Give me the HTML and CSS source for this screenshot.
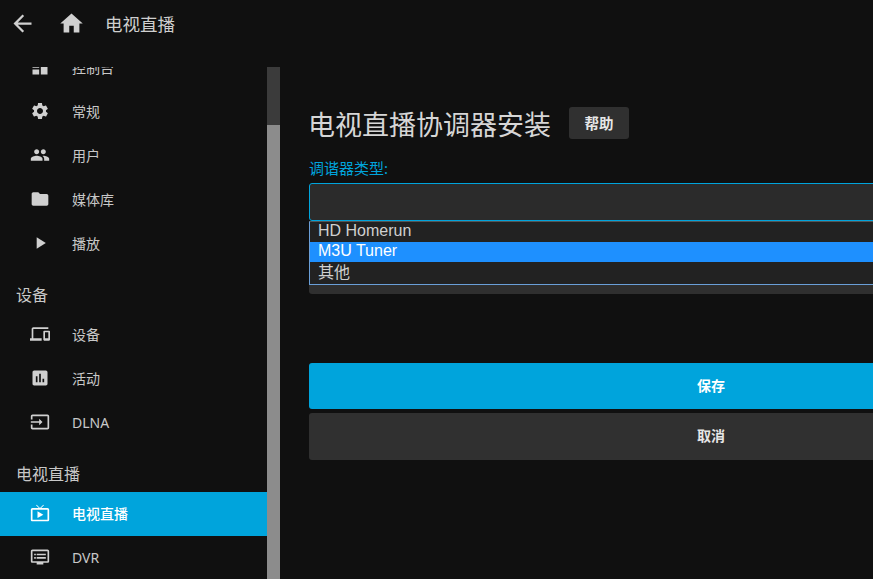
FILE: index.html
```html
<!DOCTYPE html>
<html lang="zh">
<head>
    <meta charset="UTF-8">
    <title>电视直播</title>
    <link rel="stylesheet" href="styles.css">
</head>
<body>
    <header class="topbar">
        <svg class="top-icon back" viewBox="0 0 24 24"><path d="M20 11H7.83l5.59-5.59L12 4l-8 8 8 8 1.41-1.41L7.83 13H20v-2z"/></svg>
        <svg class="top-icon home" viewBox="0 0 24 24"><path d="M10 20v-6h4v6h5v-8h3L12 3 2 12h3v8z"/></svg>
        <span class="top-title">电视直播</span>
    </header>
    <div class="layout">
        <nav class="sidebar">
            <div class="menu">
                <a class="item"><svg viewBox="0 0 24 24"><path d="M3 13h8V3H3v10zm0 8h8v-6H3v6zm10 0h8V11h-8v10zm0-18v6h8V3h-8z"/></svg><span>控制台</span></a>
                <a class="item"><svg viewBox="0 0 24 24"><path d="M19.14 12.94c.04-.3.06-.61.06-.94 0-.32-.02-.64-.07-.94l2.03-1.58c.18-.14.23-.41.12-.61l-1.92-3.32c-.12-.22-.37-.29-.59-.22l-2.39.96c-.5-.38-1.03-.7-1.62-.94l-.36-2.54c-.04-.24-.24-.41-.48-.41h-3.84c-.24 0-.43.17-.47.41l-.36 2.54c-.59.24-1.13.57-1.62.94l-2.39-.96c-.22-.08-.47 0-.59.22L2.74 8.87c-.12.21-.08.47.12.61l2.03 1.58c-.05.3-.09.63-.09.94s.02.64.07.94l-2.03 1.58c-.18.14-.23.41-.12.61l1.92 3.32c.12.22.37.29.59.22l2.39-.96c.5.38 1.03.7 1.62.94l.36 2.54c.05.24.24.41.48.41h3.84c.24 0 .44-.17.47-.41l.36-2.54c.59-.24 1.13-.56 1.62-.94l2.39.96c.22.08.47 0 .59-.22l1.92-3.32c.12-.22.07-.47-.12-.61l-2.01-1.58zM12 15.6c-1.98 0-3.6-1.62-3.6-3.6s1.62-3.6 3.6-3.6 3.6 1.62 3.6 3.6-1.62 3.6-3.6 3.6z"/></svg><span>常规</span></a>
                <a class="item"><svg viewBox="0 0 24 24"><path d="M16 11c1.66 0 2.99-1.34 2.99-3S17.66 5 16 5c-1.66 0-3 1.34-3 3s1.34 3 3 3zm-8 0c1.66 0 2.99-1.34 2.99-3S9.66 5 8 5C6.34 5 5 6.34 5 8s1.34 3 3 3zm0 2c-2.33 0-7 1.17-7 3.5V19h14v-2.5c0-2.33-4.67-3.5-7-3.5zm8 0c-.29 0-.62.02-.97.05 1.16.84 1.97 1.97 1.97 3.45V19h6v-2.5c0-2.33-4.67-3.5-7-3.5z"/></svg><span>用户</span></a>
                <a class="item"><svg viewBox="0 0 24 24"><path d="M10 4H4c-1.1 0-1.99.9-1.99 2L2 18c0 1.1.9 2 2 2h16c1.1 0 2-.9 2-2V8c0-1.1-.9-2-2-2h-8l-2-2z"/></svg><span>媒体库</span></a>
                <a class="item"><svg viewBox="0 0 24 24"><path d="M8 5v14l11-7z"/></svg><span>播放</span></a>

                <h3 class="section">设备</h3>
                <a class="item"><svg viewBox="0 0 24 24"><path d="M4 6h18V4H4c-1.1 0-2 .9-2 2v11H0v3h14v-3H4V6zm19 2h-6c-.55 0-1 .45-1 1v10c0 .55.45 1 1 1h6c.55 0 1-.45 1-1V9c0-.55-.45-1-1-1zm-1 9h-4v-7h4v7z"/></svg><span>设备</span></a>
                <a class="item"><svg viewBox="0 0 24 24"><path d="M19 3H5c-1.1 0-2 .9-2 2v14c0 1.1.9 2 2 2h14c1.1 0 2-.9 2-2V5c0-1.1-.9-2-2-2zM9 17H7v-7h2v7zm4 0h-2V7h2v10zm4 0h-2v-4h2v4z"/></svg><span>活动</span></a>
                <a class="item"><svg viewBox="0 0 24 24"><path d="M21 3.01H3c-1.1 0-2 .9-2 2V9h2V4.99h18v14.03H3V15H1v4.01c0 1.1.9 1.98 2 1.98h18c1.1 0 2-.88 2-1.98v-14c0-1.11-.9-2-2-2zM11 16l4-4-4-4v3H1v2h10v3z"/></svg><span>DLNA</span></a>

                <h3 class="section">电视直播</h3>
                <a class="item active"><svg viewBox="0 0 24 24"><path d="M21 6h-7.59l3.29-3.29L16 2l-4 4-4-4-.71.71L10.59 6H3c-1.1 0-2 .89-2 2v12c0 1.1.9 2 2 2h18c1.1 0 2-.9 2-2V8c0-1.11-.9-2-2-2zm0 14H3V8h18v12zM9 10v8l7-4z"/></svg><span>电视直播</span></a>
                <a class="item"><svg viewBox="0 0 24 24"><path d="M21 3H3c-1.1 0-2 .9-2 2v12c0 1.1.9 2 2 2h5v2h8v-2h5c1.1 0 1.99-.9 1.99-2L23 5c0-1.1-.9-2-2-2zm0 14H3V5h18v12zM19 8H8v2h11V8zm0 4H8v2h11v-2zM7 8H5v2h2V8zm0 4H5v2h2v-2z"/></svg><span>DVR</span></a>
            </div>
        </nav>
        <div class="scrollbar"><div class="scroll-thumb"></div></div>
        <main class="content">
            <div class="title-row">
                <h1>电视直播协调器安装</h1>
                <button class="help-btn">帮助</button>
            </div>
            <label class="field-label">调谐器类型:</label>
            <div class="select-wrap">
                <div class="select-box"></div>
                <div class="select-under"></div>
                <ul class="dropdown">
                    <li>HD Homerun</li>
                    <li class="selected">M3U Tuner</li>
                    <li>其他</li>
                </ul>
            </div>
            <button class="btn btn-save">保存</button>
            <button class="btn btn-cancel">取消</button>
        </main>
    </div>
</body>
</html>
```

FILE: styles.css
```css
html, body {
    height: 100%;
}

body {
    margin: 0;
    background-color: #101010;
    color: #d0d0d0;
    font-family: "Noto Sans", "Noto Sans CJK SC", sans-serif;
    overflow: hidden;
}

.topbar {
    height: 47px;
    display: flex;
    align-items: center;
    color: #cfcfcf;
}

.top-icon {
    width: 27px;
    height: 27px;
    fill: #d0d0d0;
    flex: none;
}

.back {
    margin-left: 9px;
}

.home {
    margin-left: 22px;
}

.top-title {
    margin-left: 20px;
    font-size: 17.5px;
}

.layout {
    display: flex;
    margin-top: 20px;
    height: 512px;
    overflow: hidden;
}

.sidebar {
    width: 267px;
    flex: none;
    overflow: hidden;
}

.menu {
    margin-top: -21px;
}

.item {
    display: flex;
    align-items: center;
    box-sizing: border-box;
    height: 44px;
    padding-left: 30px;
    padding-bottom: 2px;
    font-size: 14px;
    color: #c8c8c8;
}

.item svg {
    width: 20px;
    height: 20px;
    fill: #d0d0d0;
    margin-right: 22px;
    flex: none;
}

.item.active {
    background-color: #00a4dc;
    color: #fff;
    font-weight: 500;
}

.item.active svg {
    fill: #fff;
}

.section {
    margin: 0;
    padding: 17px 0 6px 16px;
    height: 24px;
    line-height: 24px;
    font-size: 16px;
    font-weight: normal;
    color: #c8c8c8;
}

.scrollbar {
    width: 13px;
    flex: none;
    background-color: #3b3b3b;
    padding-top: 58px;
}

.scroll-thumb {
    height: 100%;
    background-color: #8c8c8c;
}

.content {
    flex: none;
    width: 804px;
    margin-left: 29px;
    padding-top: 40px;
}

.title-row {
    display: flex;
    align-items: center;
    height: 32px;
}

.title-row h1 {
    margin: 0 0 0 -1px;
    font-size: 27px;
    font-weight: normal;
    color: #d6d6d6;
}

.help-btn {
    margin-left: 18px;
    width: 60px;
    height: 32px;
    padding-bottom: 3px;
    border: 0;
    border-radius: 3px;
    background-color: #303030;
    color: #e6e6e6;
    font-family: inherit;
    font-size: 14.5px;
    font-weight: bold;
}

.field-label {
    display: block;
    margin-top: 20px;
    height: 18px;
    line-height: 18px;
    font-size: 15px;
    color: #00a4dc;
}

.select-wrap {
    position: relative;
    margin-top: 6px;
    height: 111px;
}

.select-box {
    height: 36px;
    border: 1px solid #00a4dc;
    border-radius: 3px;
    background-color: #2b2b2b;
}

.select-under {
    height: 73px;
    border-radius: 0 0 3px 3px;
    background-color: #2f2f2f;
}

.dropdown {
    position: absolute;
    left: 0;
    right: 0;
    top: 38px;
    margin: 0;
    padding: 0;
    list-style-type: none;
    border: 1px solid #6a9fd8;
    border-top-color: #555;
    background-color: #222;
    font-family: "Liberation Sans", "Noto Sans CJK SC", sans-serif;
    font-size: 16px;
    color: #d0d0d0;
}

.dropdown li {
    height: 20px;
    line-height: 18px;
    padding-left: 8px;
}

.dropdown li:last-child {
    height: 22px;
    line-height: 22px;
}

.dropdown .selected {
    background-color: #1e90ff;
    color: #fff;
}

.btn {
    display: block;
    width: 100%;
    height: 46px;
    padding-bottom: 3px;
    border: 0;
    border-radius: 3px;
    font-family: inherit;
    font-size: 14px;
    font-weight: bold;
}

.btn-save {
    margin-top: 69px;
    background-color: #00a4dc;
    color: #fff;
}

.btn-cancel {
    margin-top: 4px;
    height: 47px;
    padding-bottom: 5px;
    background-color: #303030;
    color: #e6e6e6;
}
```
